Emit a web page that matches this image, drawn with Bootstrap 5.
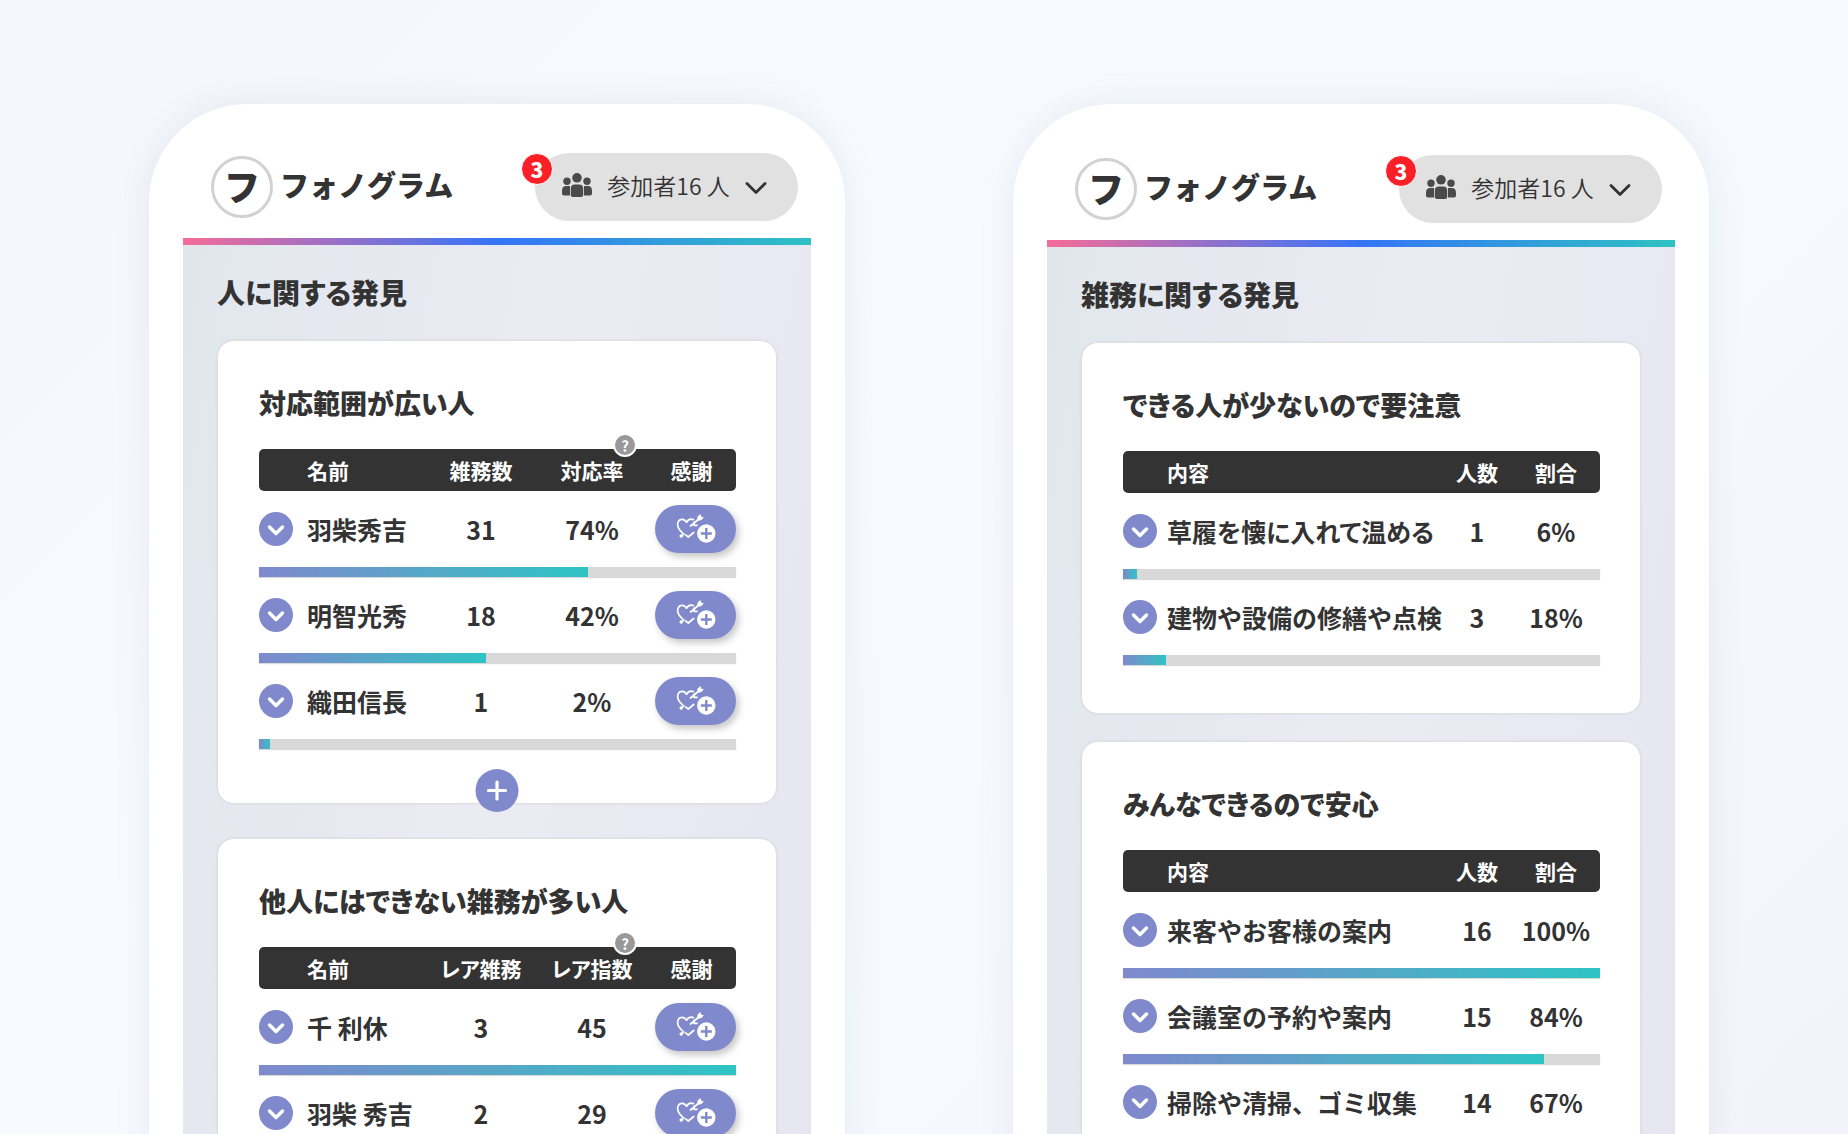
<!DOCTYPE html>
<html lang="ja">
<head>
<meta charset="utf-8">
<meta name="viewport" content="width=device-width, initial-scale=1">
<title>フォノグラム</title>
<link href="https://cdn.jsdelivr.net/npm/bootstrap@5.3.0/dist/css/bootstrap.min.css" rel="stylesheet">
<style>
:root { --ink: #333; --violet: #8089cb; --teal: #2ec4c4; }
body {
  font-family: "Noto Sans CJK JP", sans-serif;
  color: var(--ink);
  background: linear-gradient(135deg, #f3f6fb 0%, #f7fbff 35%, #f6f9ff 65%, #f3f3fb 100%);
}
.stage { height: 100vh; padding: 104px 139px 0 149px; gap: 168px; }
.phone {
  flex: 1 1 0; min-width: 0; min-height: 1200px;
  padding: 0 34px; border-radius: 98px 98px 0 0;
  box-shadow: 0 0 36px rgba(90, 110, 140, .11);
}
.app-head { height: 134px; padding: 49px 13px 0 28px; }
.phone-lower .app-head { height: 136px; padding-top: 51px; }
.brand { height: 68px; gap: 7px; font-size: 29px; font-weight: 800; color: var(--ink); }
.brand-mark { width: 62px; height: 62px; border: 3px solid #d2d2d2; font-size: 36px; font-weight: 900; line-height: 1; }
.people-btn { height: 68px; width: 263px; background: #e1e1e1; font-size: 23px; font-weight: 350; color: var(--ink); padding: 0 31px 4px 27px; }
.people-btn:hover { background: #d8d8d8; }
.people-btn .chev { margin-top: 6px; }
.count-dot { left: -14px; top: 0; width: 32px; height: 32px; border: 1px solid #fff; background: #fb1f28; color: #fff; font-size: 21px; font-weight: 800; line-height: 1; }
.screen { border-top: 7px solid; border-image: linear-gradient(90deg, #f76b98, #3575f7 50%, #2ec2c2) 1; background: linear-gradient(100deg, #e1e6ed 0%, #ebebf4 50%, #e6e6f1 100%); min-height: 1000px; padding: 27px 34px 0; }
.screen h1 { font-size: 28px; font-weight: 900; line-height: 40px; margin: 0 0 28px; }
.finding { border: 1px solid #dfdfe3; border-radius: 17px; padding: 42px 40px 54px 41px; margin-bottom: 34px; box-shadow: 0 0 3px rgba(0, 0, 0, .06); color: inherit; }
.phone-lower .finding { padding-bottom: 48px; margin-bottom: 27px; }
.finding h2 { font-size: 27px; font-weight: 900; line-height: 40px; margin: 0 0 26px; white-space: nowrap; }
h1, h2, .grid th, .name-tight { font-feature-settings: "palt"; }
.grid { width: 100%; table-layout: fixed; border-collapse: separate; border-spacing: 0; }
.grid th { height: 42px; padding: 0; background: #333; color: #fff; font-size: 21px; font-weight: 700; line-height: 30px; white-space: nowrap; }
.grid th:first-child { border-radius: 5px 0 0 5px; }
.grid th:last-child { border-radius: 0 5px 5px 0; }
.grid th.thanks { padding-right: 8px; }
.data-row td { height: 76px; padding: 0; font-size: 25px; font-weight: 700; line-height: 34px; white-space: nowrap; }
.meter-row td { height: 10px; padding: 0; }
.meter-row .progress { height: 10px; background: #d8d8d8; border-radius: 0; box-shadow: 0 1px 1px rgba(0, 0, 0, .15); }
.meter-row .progress-bar { background: linear-gradient(90deg, #7f89cd, var(--teal)); }
.c-toggle { width: 48px; } .c-num { width: 96px; } .c-rate { width: 126px; } .c-thanks { width: 81px; }
.phone-lower .c-toggle { width: 44px; } .c-people { width: 70px; } .c-share { width: 88px; }
.round-btn { width: 34px; height: 34px; background: var(--violet); }
.round-btn:hover, .thanks-btn:hover { background: #6f79c0; }
.thanks-btn { width: 81px; height: 48px; background: var(--violet); box-shadow: 3px 4px 7px rgba(0, 0, 0, .22); }
.more-btn { width: 43px; height: 43px; background: var(--violet); left: 50%; bottom: -9px; transform: translateX(-50%); }
.help-btn { width: 24px; height: 24px; left: calc(50% + 21px); top: -16px; border: 2px solid #fff; background: #999; color: #fff; font-size: 15px; font-weight: 700; line-height: 1; }
</style>
</head>
<body class="overflow-hidden">
<svg class="d-none">
  <symbol id="i-down" viewBox="0 0 34 34"><path d="M10.500 15l6.500 6.500 6.500-6.500" fill="none" stroke="#fff" stroke-width="3.500" stroke-linecap="round" stroke-linejoin="round"/></symbol>
  <symbol id="i-chev" viewBox="0 0 22 14"><path d="M2 2.500l9 9 9-9" fill="none" stroke="#333" stroke-width="2.800" stroke-linecap="round" stroke-linejoin="round"/></symbol>
  <symbol id="i-plus" viewBox="0 0 43 43"><path d="M21.500 13v17M13 21.500h17" fill="none" stroke="#fff" stroke-width="3.200" stroke-linecap="round"/></symbol>
  <symbol id="i-people" viewBox="0 0 30 24">
    <g fill="#4a4a4a"><circle cx="15" cy="4.800" r="4.800"/><circle cx="5" cy="8.300" r="3.700"/><circle cx="25" cy="8.300" r="3.700"/>
    <path d="M8.800 15.500q0-4 4-4h4.400q4 0 4 4v6.500q0 2-2 2h-8.400q-2 0-2-2z"/>
    <path d="M8 13H4q-4 0-4 5v2.500q0 2 2 2h6z"/><path d="M22 13H26q4 0 4 5v2.500q0 2-2 2h-6z"/></g>
  </symbol>
  <symbol id="i-thanks" viewBox="0 0 40 30">
    <g fill="none" stroke="#fff" stroke-width="1.700" stroke-linecap="round" stroke-linejoin="round">
      <path d="M10.500 8.200C8.800 4.500 3.600 4.200 2 8.200 .8 12 3.200 16 6.500 18.800"/>
      <path d="M10.500 8.200C12 5.600 14.500 4.600 17.500 5.600"/>
      <path d="M9.500 20.800l2.800 2.200 5.400-4.500"/>
      <path d="M14.500 12L24 4"/><path d="M18 8.300v3h3"/>
      <path d="M5 22.500l2.800-2.600"/>
    </g>
    <path d="M21 5.200l.8-3L24.500 0l.6 2.600 2.700.6L25.500 6l-3 .8z" fill="#fff"/>
    <circle cx="5.200" cy="22" r="1.700" fill="#fff"/>
    <circle cx="30.300" cy="19.500" r="9.200" fill="#fff"/>
    <path d="M30.300 14v11M24.800 19.500h11" stroke="#8089cb" stroke-width="2.400"/>
  </symbol>
</svg>
<main class="stage d-flex align-items-start overflow-hidden" id="stage"></main>
<script>
const phones = [
  { title: '人に関する発見', lower: false, cards: [
    { title: '対応範囲が広い人', heads: ['名前', '雑務数', '対応率', '感謝'], more: true,
      rows: [['羽柴秀吉', '31', '74%', 69], ['明智光秀', '18', '42%', 47.6], ['織田信長', '1', '2%', 2.3]] },
    { title: '他人にはできない雑務が多い人', heads: ['名前', 'レア雑務', 'レア指数', '感謝'],
      rows: [['千 利休', '3', '45', 100], ['羽柴 秀吉', '2', '29', 64]] } ] },
  { title: '雑務に関する発見', lower: true, cards: [
    { title: 'できる人が少ないので要注意', heads: ['内容', '人数', '割合'],
      rows: [['草履を懐に入れて温める', '1', '6%', 3, 'name-tight'], ['建物や設備の修繕や点検', '3', '18%', 9]] },
    { title: 'みんなできるので安心', heads: ['内容', '人数', '割合'],
      rows: [['来客やお客様の案内', '16', '100%', 100], ['会議室の予約や案内', '15', '84%', 88.3], ['掃除や清掃、ゴミ収集', '14', '67%', 67]] } ] }
];
const icon = (id, w, h, cls = '') => `<svg class="${cls}" width="${w}" height="${h}" aria-hidden="true"><use href="#${id}"/></svg>`;
const center = 'd-flex align-items-center justify-content-center';

function tableOf(card, lower) {
  const cols = lower ? ['c-toggle', '', 'c-people', 'c-share'] : ['c-toggle', '', 'c-num', 'c-rate', 'c-thanks'];
  const help = `<button type="button" class="help-btn btn p-0 rounded-circle position-absolute ${center}" aria-label="説明">?</button>`;
  const heads = card.heads.map((h, i) => {
    if (i === 0) return `<th scope="col" class="text-start">${h}</th>`;
    if (!lower && i === 2) return `<th scope="col" class="text-center position-relative">${h}${help}</th>`;
    return `<th scope="col" class="text-center${i === 3 ? ' thanks' : ''}">${h}</th>`;
  }).join('');
  const rows = card.rows.map(([name, a, b, pct, cls = '']) => `
    <tr class="data-row">
      <td><button type="button" class="round-btn btn p-0 border-0 rounded-circle ${center}" aria-label="${name}の詳細">${icon('i-down', 34, 34)}</button></td>
      <td class="${cls}">${name}</td><td class="text-center">${a}</td><td class="text-center">${b}</td>
      ${lower ? '' : `<td><button type="button" class="thanks-btn btn p-0 border-0 rounded-pill ${center}" aria-label="感謝を送る">${icon('i-thanks', 40, 30)}</button></td>`}
    </tr>
    <tr class="meter-row"><td colspan="${cols.length}"><div class="progress" role="progressbar" aria-label="${name}" aria-valuenow="${pct}" aria-valuemin="0" aria-valuemax="100"><div class="progress-bar" style="width:${pct}%"></div></div></td></tr>`).join('');
  return `<table class="grid"><colgroup>${cols.map(c => `<col class="${c}">`).join('')}</colgroup>
    <thead><tr><th></th>${heads}</tr></thead><tbody>${rows}</tbody></table>`;
}

document.getElementById('stage').innerHTML = phones.map(p => `
  <section class="phone bg-white${p.lower ? ' phone-lower' : ''}">
    <header class="app-head d-flex justify-content-between align-items-start">
      <a href="#" class="brand d-flex align-items-center text-decoration-none">
        <span class="brand-mark rounded-circle pb-1 ${center}">フ</span><span class="pb-1">フォノグラム</span></a>
      <button type="button" class="people-btn btn border-0 rounded-pill position-relative d-flex align-items-center justify-content-between">
        ${icon('i-people', 30, 24)}<span>参加者16 人</span>${icon('i-chev', 22, 14, 'chev')}
        <span class="count-dot position-absolute rounded-circle ${center}">3</span>
      </button>
    </header>
    <div class="screen">
      <h1>${p.title}</h1>
      ${p.cards.map(c => `<article class="finding card"><h2>${c.title}</h2>${tableOf(c, p.lower)}
        ${c.more ? `<button type="button" class="more-btn btn p-0 border-0 rounded-circle position-absolute ${center}" aria-label="もっと見る">${icon('i-plus', 43, 43)}</button>` : ''}</article>`).join('')}
    </div>
  </section>`).join('');
</script>
<script src="https://cdn.jsdelivr.net/npm/bootstrap@5.3.0/dist/js/bootstrap.bundle.min.js"></script>
</body>
</html>
